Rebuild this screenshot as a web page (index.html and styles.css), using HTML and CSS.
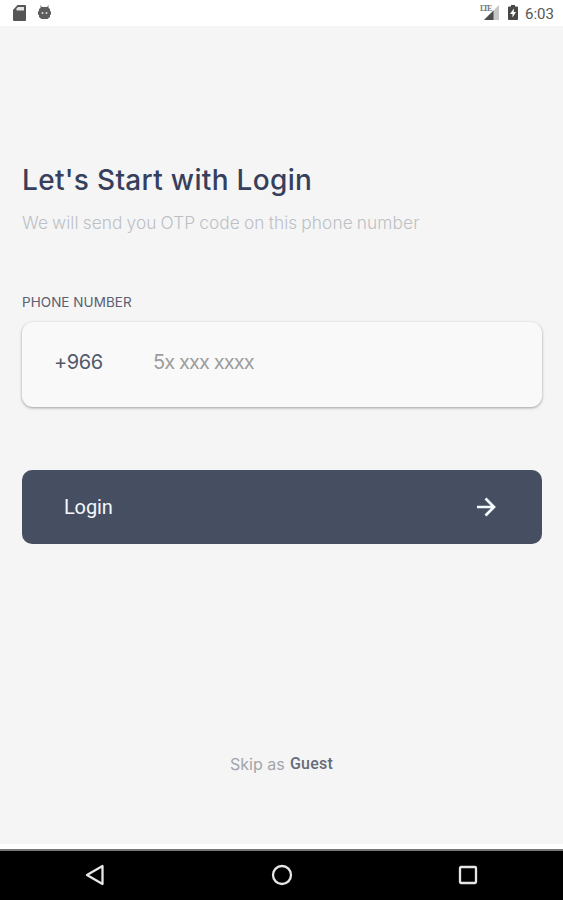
FILE: index.html
```html
<!DOCTYPE html>
<html lang="en">
<head>
<meta charset="utf-8">
<title>Login</title>
<link rel="stylesheet" href="styles.css">
</head>
<body>
<header class="status">
  <div class="status-group">
    <svg class="sd" width="13" height="16" viewBox="0 0 13 16"><path d="M4.5 0H12q1 0 1 1v14q0 1-1 1H1q-1 0-1-1V5z" fill="#555"/><path d="M5 2h6v3.500H3.500V3.500z" fill="#e4e4e4"/></svg>
    <svg class="bot" width="13" height="15" viewBox="0 0 13 15"><path d="M2.500 0l1.300 2h5.400l1.300-2v3l1.500 1v2l1 .5v3l-1 .5v2L9.500 14h-6L1 12v-2l-1-.5v-3L1 6V4l1.500-1z" fill="#5d5d5d"/><circle cx="4.500" cy="8" r="1" fill="#ddd"/><circle cx="8.500" cy="8" r="1" fill="#ddd"/></svg>
  </div>
  <div class="status-group">
    <span class="lte">LTE</span>
    <svg class="signal" width="15" height="15" viewBox="0 0 15 15"><path d="M15 0v15H0z" fill="#c6c6c6"/><path d="M9.500 5.500V15H0z" fill="#4c4c4c"/></svg>
    <svg class="battery" width="10" height="15" viewBox="0 0 10 15"><path d="M3 0h4v1.500h2q1 0 1 1V14q0 1-1 1H1q-1 0-1-1V2.500q0-1 1-1h2z" fill="#484848"/><path d="M5.800 3.500L2 9h2.500v3.500L8 7H5.800z" fill="#fff"/></svg>
    <span class="clock">6:03</span>
  </div>
</header>
<main class="screen">
  <h1 class="title">Let's Start with Login</h1>
  <p class="subtitle">We will send you OTP code on this phone number</p>
  <div class="label">PHONE NUMBER</div>
  <div class="field"><span class="prefix">+966</span><span class="placeholder">5x xxx xxxx</span></div>
  <div class="login" role="button"><span class="login-text">Login</span>
    <svg width="20" height="20" viewBox="0 0 20 20" fill="none" stroke="#f5faff" stroke-width="2.700"><path d="M1 10h17M9.500 1.500L18 10 9.500 18.500"/></svg>
  </div>
  <div class="skip"><span class="skip-text">Skip as</span><span class="guest">Guest</span></div>
</main>
<nav class="navbar">
  <svg width="20" height="22" viewBox="0 0 20 22"><path d="M2 11L17.500 2v18z"/></svg>
  <svg width="22" height="22" viewBox="0 0 22 22"><circle cx="11" cy="11" r="9"/></svg>
  <svg width="20" height="20" viewBox="0 0 20 20"><rect x="2" y="2" width="16" height="16" rx="1"/></svg>
</nav>
</body>
</html>
```
FILE: styles.css
```css
* { box-sizing: border-box; }
body { margin: 0; width: 563px; height: 900px; display: flex; flex-direction: column; background: #f5f5f5; overflow: hidden; }
h1, p { margin: 0; font-weight: 400; }
svg { display: block; flex: none; }
span, h1, p, .label { white-space: nowrap; }
.status { height: 26px; flex: none; display: flex; justify-content: space-between; background: #fff; padding: 0 9px 0 13px; }
.status-group { display: flex; align-items: flex-start; }
.sd { margin-top: 5px; }
.bot { margin: 5px 0 0 12px; }
.lte { font: 700 8px/8px "Liberation Serif", serif; color: #777; margin-top: 5px; width: 4px; letter-spacing: -1.5px; }
.signal { margin-top: 5px; }
.battery { margin: 5px 0 0 9px; }
.clock { font: 400 15px/18px Roboto, sans-serif; color: #555; margin: 5px 0 0 7px; width: 29px; }
.screen { flex: 1; padding: 0 21px 0 22px; border-bottom: 5px solid #fff; display: flex; flex-direction: column; }
.title { font: 500 28px/36px Inter, sans-serif; letter-spacing: .32px; color: #363f5b; margin-top: 136px; }
.subtitle { font: 300 17.3px/24px Inter, sans-serif; letter-spacing: .09px; word-spacing: -.9px; color: #bcc0c5; margin-top: 13px; }
.label { font: 400 13.5px/18px Inter, sans-serif; letter-spacing: .05px; color: #596070; margin-top: 58px; }
.field { height: 85px; margin: 11px 0 0; background: #f9f9f9; border-radius: 11px; box-shadow: 0 1px 3px rgba(0,0,0,.36); padding: 28px 0 0 32px; display: flex; }
.prefix { font: 400 20px/24px Inter, sans-serif; letter-spacing: -.4px; color: #515a6b; width: 99px; }
.placeholder { font: 400 20px/24px Inter, sans-serif; letter-spacing: -.9px; color: #9d9d9d; }
.login { height: 74px; margin-top: 63px; background: #454f61; border-radius: 10px; padding: 0 46px 0 42px; display: flex; align-items: center; justify-content: space-between; }
.login-text { font: 400 20px/24px Roboto, sans-serif; letter-spacing: -.15px; color: #f4f8ff; }
.skip { display: flex; margin: 210px 0 0 208px; }
.skip-text { font: 400 16px/21px Inter, sans-serif; color: #a0a5aa; width: 60px; }
.guest { font: 500 16px/20px Roboto, sans-serif; letter-spacing: .2px; color: #666c77; }
.navbar { height: 51px; flex: none; background: #000; border-top: 2px solid #777; display: flex; align-items: center; justify-content: space-between; padding: 0 85px; }
.navbar svg { fill: none; stroke: #e6e6e6; stroke-width: 2.3; stroke-linejoin: round; margin-bottom: 2px; }
```
